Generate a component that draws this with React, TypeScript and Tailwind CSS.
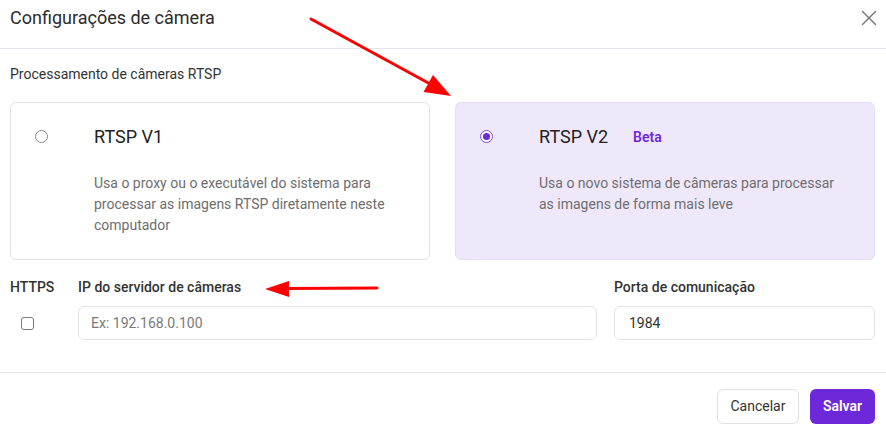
import { X } from 'lucide-react';

function Radio({ checked }: { checked: boolean }) {
  if (checked) {
    return (
      <span className="mt-[5px] flex h-[13px] w-[13px] shrink-0 items-center justify-center rounded-full border-[1.5px] border-[#7c4ddf] bg-white">
        <span className="h-[7px] w-[7px] rounded-full bg-[#6d28d9]" />
      </span>
    );
  }
  return <span className="mt-[5px] h-[13px] w-[13px] shrink-0 rounded-full border border-[#8a8a8a] bg-white" />;
}

interface OptionProps {
  title: string;
  description: string;
  checked: boolean;
  badge?: string;
}

function Option({ title, description, checked, badge }: OptionProps) {
  return (
    <div
      className={`flex h-[158px] items-start rounded-[6px] border pl-[24px] pt-[22px] ${
        checked ? 'border-[#e4ddf3] bg-[#efe8fb]' : 'border-[#e3e3e3] bg-white'
      }`}
    >
      <Radio checked={checked} />
      <div className="ml-[46px] pr-[30px]">
        <div className="flex items-center">
          <span className="text-[18px] leading-[24px] text-[#222]">{title}</span>
          {badge && <span className="ml-[25px] text-[14px] font-semibold text-[#6d28d9]">{badge}</span>}
        </div>
        <p className="mt-[24px] text-[14px] leading-[21px] text-[#6e6e6e]">{description}</p>
      </div>
    </div>
  );
}

export default function App() {
  return (
    <div className="relative h-[434px] w-[886px] overflow-hidden bg-white font-['Roboto',sans-serif]">
      <div className="flex h-[49px] items-start justify-between border-b border-[#e2e5ec] pl-[10px] pr-[4px] pt-[6px]">
        <h1 className="text-[18px] leading-[24px] text-[#2b2b2b]">Configurações de câmera</h1>
        <X className="-mt-[1px] h-[26px] w-[26px] text-[#777]" strokeWidth={1.3} />
      </div>

      <div className="border-b border-[#e2e5ec] px-[10px] pb-[32px] pr-[11px]">
        <p className="mt-[15px] text-[14px] leading-[20px] text-[#333]">Processamento de câmeras RTSP</p>

        <div className="mt-[18px] grid grid-cols-2 gap-[25px]">
          <Option
            title="RTSP V1"
            checked={false}
            description="Usa o proxy ou o executável do sistema para processar as imagens RTSP diretamente neste computador"
          />
          <Option
            title="RTSP V2"
            badge="Beta"
            checked
            description="Usa o novo sistema de câmeras para processar as imagens de forma mais leve"
          />
        </div>

        <div className="mt-[17px] flex">
          <div className="w-[68px] shrink-0">
            <div className="text-[14px] font-medium leading-[20px] text-[#333]">HTTPS</div>
            <div className="mt-[9px] flex h-[34px] items-center pl-[11px]">
              <span className="h-[13px] w-[13px] rounded-[3px] border border-[#777] bg-white" />
            </div>
          </div>
          <div className="flex-1">
            <div className="text-[14px] font-medium leading-[20px] text-[#333]">IP do servidor de câmeras</div>
            <input
              className="mt-[9px] h-[34px] w-full rounded-[6px] border border-[#e3e3e3] px-[12px] text-[14px] text-[#333] outline-none placeholder:text-[#7a7a7a]"
              placeholder="Ex: 192.168.0.100"
            />
          </div>
          <div className="ml-[17px] w-[261px] shrink-0">
            <div className="text-[14px] font-medium leading-[20px] text-[#333]">Porta de comunicação</div>
            <input
              className="mt-[9px] h-[34px] w-full rounded-[6px] border border-[#e3e3e3] px-[14px] text-[14px] text-[#333] outline-none"
              defaultValue="1984"
            />
          </div>
        </div>
      </div>

      <div className="flex justify-end gap-[11px] pr-[11px] pt-[16px]">
        <button className="h-[35px] w-[82px] rounded-[6px] border border-[#e0e0e0] bg-white text-[14px] text-[#333]">
          Cancelar
        </button>
        <button className="h-[35px] w-[65px] rounded-[6px] bg-[#6d28d9] text-[14px] font-semibold text-white">
          Salvar
        </button>
      </div>

      <svg className="pointer-events-none absolute inset-0" width="886" height="434">
        <line x1="311" y1="19" x2="432" y2="85" stroke="#ff0000" strokeWidth="3" strokeLinecap="round" />
        <polygon points="451,96 423.5,92 433,75" fill="#ff0000" />
        <line x1="377" y1="288" x2="285" y2="288.5" stroke="#ff0000" strokeWidth="3" strokeLinecap="round" />
        <polygon points="265,289 289,281 289,297" fill="#ff0000" />
      </svg>
    </div>
  );
}
